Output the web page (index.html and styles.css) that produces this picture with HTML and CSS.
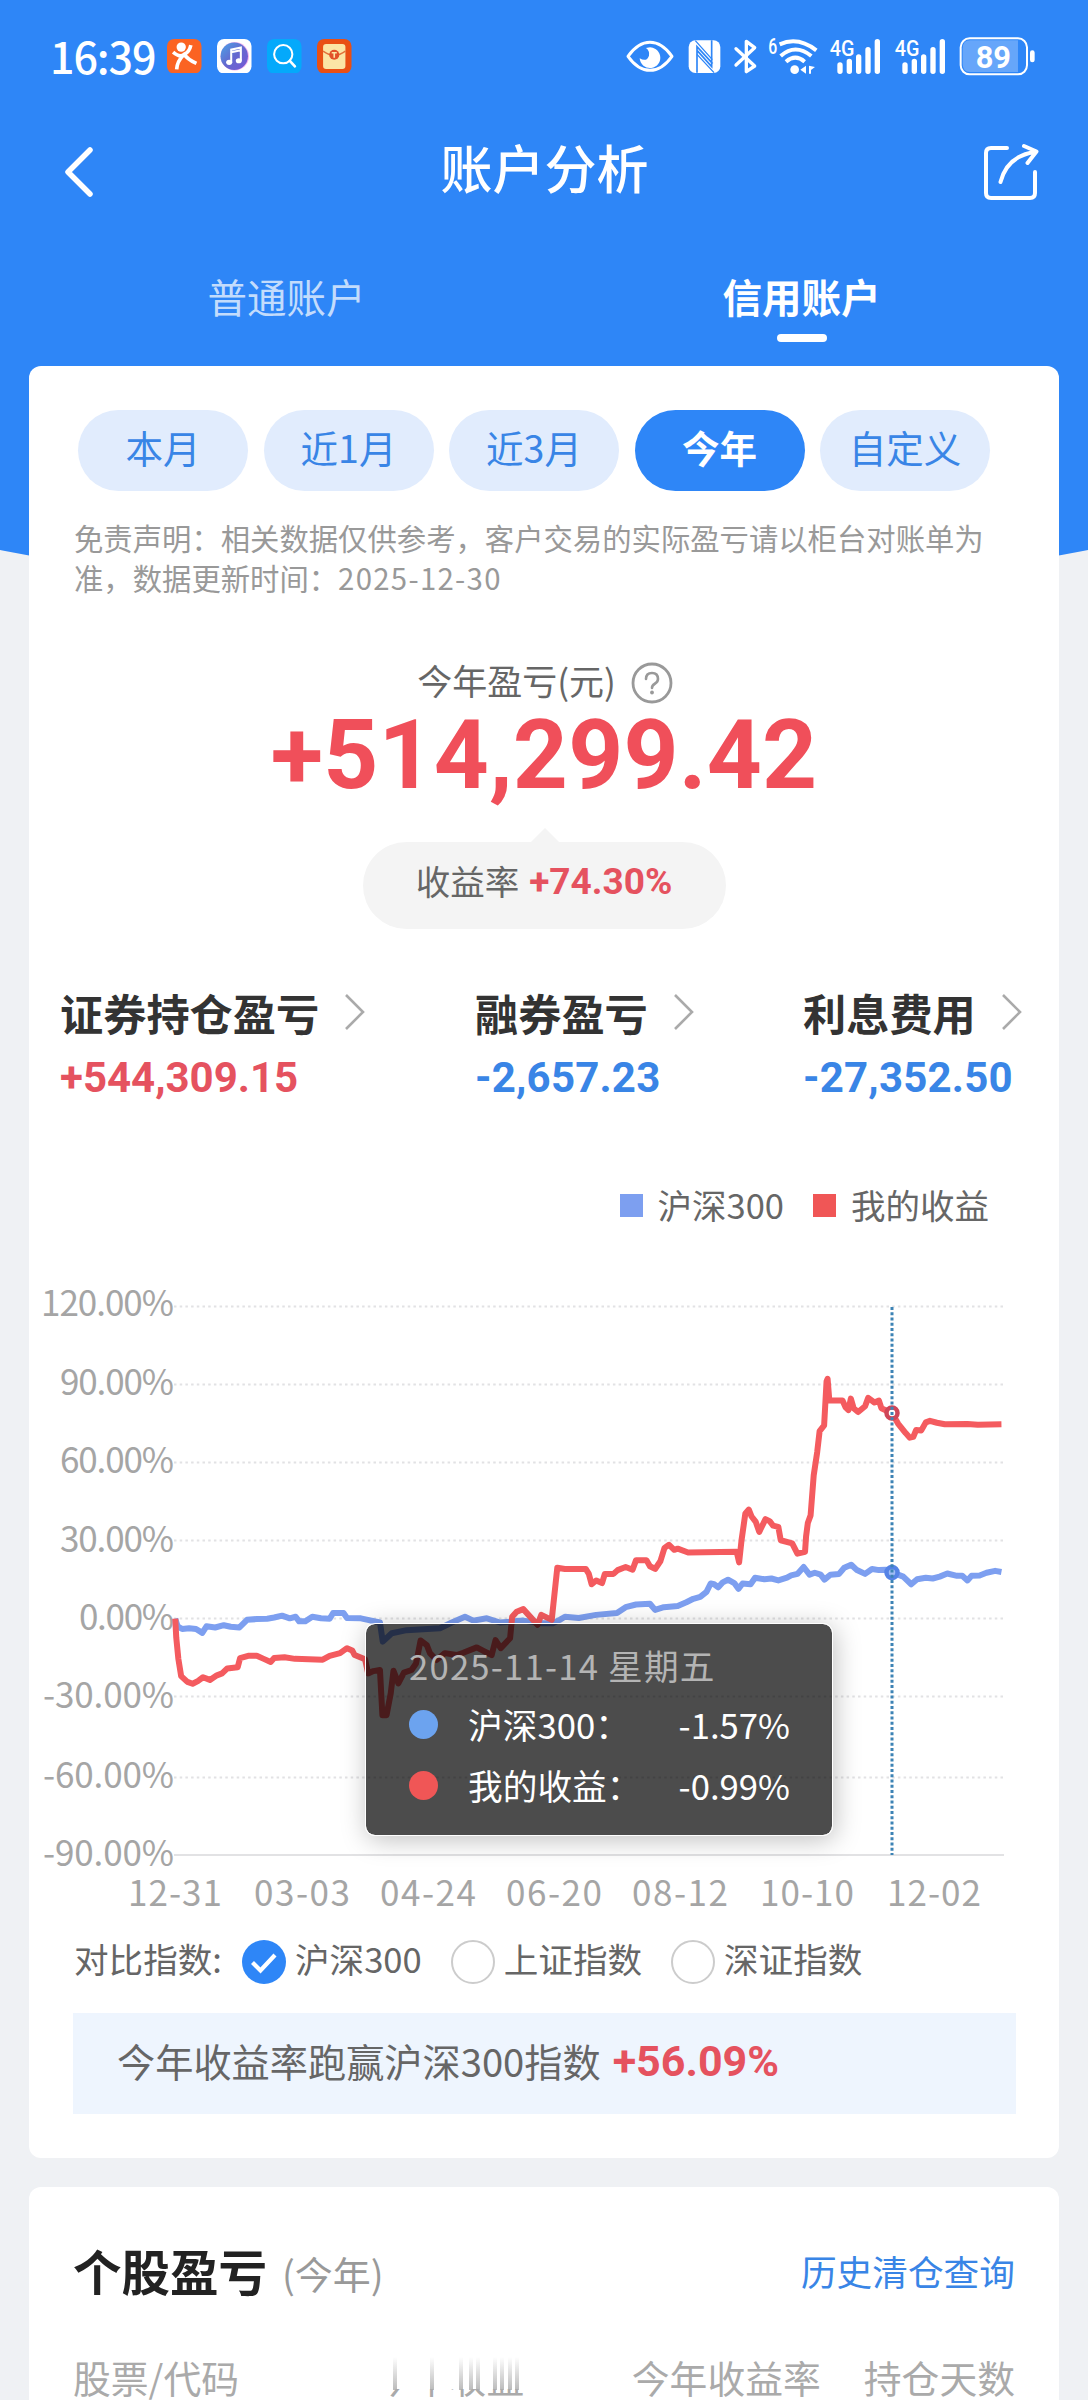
FILE: index.html
```html
<!DOCTYPE html>
<html lang="zh-CN">

<head>
	<meta charset="UTF-8">
	<meta name="viewport" content="width=device-width, initial-scale=1.0">
	<title>账户分析</title>
	<link rel="stylesheet" href="styles.css">
</head>

<body>
	<div class="page">
		<div class="page-bg"></div>

		<!-- 状态栏 -->
		<div class="status-bar">
			<span class="time">16:39</span>
			<div class="app-icons">
				<svg viewBox="0 0 34 34">
					<rect width="34" height="34" rx="7" fill="#fb6322" />
					<circle cx="14" cy="8" r="4.6" fill="#fff" />
					<path d="M6 13Q13 19 17 15Q22 13 23.500 6M17 15Q20 20 29 24M16 16Q10 22 9.500 30" fill="none" stroke="#fff" stroke-width="3.600" />
				</svg>
				<svg viewBox="0 0 34 34">
					<defs>
						<linearGradient id="music" x1="0" y1="0" x2="1" y2="1">
							<stop offset="0" stop-color="#4aa4e8" />
							<stop offset=".5" stop-color="#6469cf" />
							<stop offset="1" stop-color="#7657d6" />
						</linearGradient>
					</defs>
					<rect width="34" height="34" rx="7" fill="#fff" />
					<circle cx="17.500" cy="17" r="14" fill="#f3b5ee" />
					<circle cx="17" cy="17" r="13.500" fill="url(#music)" />
					<path d="M14 23V10.500L23.500 8.500V21.500M14 13L23.500 11" fill="none" stroke="#fff" stroke-width="2" />
					<ellipse cx="12" cy="23" rx="3" ry="2.500" fill="#fff" />
					<ellipse cx="21.500" cy="21.500" rx="3" ry="2.500" fill="#fff" />
				</svg>
				<svg viewBox="0 0 34 34">
					<rect width="34" height="34" rx="7" fill="#04a9fb" />
					<circle cx="16" cy="15" r="9" fill="none" stroke="#fff" stroke-width="2" />
					<path d="M22.500 21.500L27.500 27" stroke="#fff" stroke-width="2.600" stroke-linecap="round" />
				</svg>
				<svg viewBox="0 0 34 34">
					<rect width="34" height="34" rx="7" fill="#e94f14" />
					<rect x="6" y="5" width="22" height="24.500" rx="3" fill="#fbe5a5" />
					<path d="M6 12Q17 20 28 12" fill="none" stroke="#e2703a" stroke-width="1.500" />
					<circle cx="17" cy="15.500" r="5" fill="#e2512a" />
					<path d="M14.500 13.500H19.500M17 13.500V18.500" stroke="#fbe5a5" stroke-width="1.600" />
				</svg>
			</div>
			<div class="sys-icons">
				<svg viewBox="48 20 164 114" width="54.670">
					<path d="M54 78Q84 36 120 36T186 78Q156 120 120 120T54 78Z" fill="none" stroke="#fff" stroke-width="9" stroke-linejoin="round" />
					<path d="M112 52A31 31 0 1 1 89 84Q110 96 117 76Q120 62 108 53Z" fill="#fff" />
				</svg>
				<svg viewBox="212 20 138 114" width="46">
					<rect x="235" y="30" width="95" height="98" rx="20" fill="#fff" />
					<path d="M260 127V49L307 100M304 30V109L260 60" fill="none" stroke="#2e86f7" stroke-width="5" />
					<path d="M255 31L306 88M260 72L311 127" stroke="#2e86f7" stroke-width="4" />
				</svg>
				<svg viewBox="350 20 108 114" width="36">
					<path d="M377 55L433 107L408 124V33L433 52L377 104" fill="none" stroke="#fff" stroke-width="10" stroke-linejoin="round" stroke-linecap="round" />
				</svg>
				<svg viewBox="458 20 182 114" width="60.670">
					<text x="474" y="71" font-size="64" textLength="27" lengthAdjust="spacingAndGlyphs">6</text>
					<g fill="none" stroke="#fff" stroke-width="12">
						<path d="M508 42Q563 17 618 60" />
						<path d="M511 77Q555 38 603 77" />
						<path d="M527 94Q555 70 583 94" />
					</g>
					<circle cx="553" cy="118" r="13" fill="#fff" />
					<path d="M570 118L587 106V130M587 118H577M596 130V106L614 110L602 119V130Z" fill="#fff" />
				</svg>
				<svg viewBox="640 20 195 114" width="65">
					<text x="657" y="76" font-size="68" textLength="74" lengthAdjust="spacingAndGlyphs">4G</text>
					<path d="M688 104V123M716 93V123M744 80V123M772 58V123M800 34V123" stroke="#fff" stroke-width="16" stroke-linecap="round" />
				</svg>
				<svg viewBox="640 20 195 114" width="65">
					<text x="657" y="76" font-size="68" textLength="74" lengthAdjust="spacingAndGlyphs">4G</text>
					<path d="M688 104V123M716 93V123M744 80V123M772 58V123M800 34V123" stroke="#fff" stroke-width="16" stroke-linecap="round" />
				</svg>
				<svg viewBox="1030 20 250 114" width="83.330">
					<path d="M1222 30V125H1078Q1056 125 1056 100V55Q1056 30 1078 30Z" fill="#66a6fa" />
					<rect x="1050" y="24" width="199" height="108" rx="27" fill="none" stroke="#fff" stroke-width="6" />
					<rect x="1258" y="60" width="14" height="36" rx="7" fill="#fff" />
					<text class="level" x="1095" y="113" font-size="96" textLength="106" lengthAdjust="spacingAndGlyphs">89</text>
				</svg>
			</div>
		</div>

		<!-- 导航栏 -->
		<div class="nav-bar">
			<svg class="back" viewBox="0 0 34 56">
				<path d="M28 6L6 28L28 50" fill="none" stroke="#fff" stroke-width="5.500" stroke-linecap="round" stroke-linejoin="round" />
			</svg>
			<h1>账户分析</h1>
			<svg class="share" viewBox="0 0 60 60">
				<path d="M26 6H10Q5 6 5 11V51Q5 56 10 56H49Q54 56 54 51V30M19.500 40Q26 14 54 10M43 4L55.500 9.500L46.500 21" fill="none" stroke="#fff" stroke-width="4" stroke-linecap="round" stroke-linejoin="round" />
			</svg>
		</div>

		<div class="tabs">
			<div class="tab">普通账户</div>
			<div class="tab active">信用账户</div>
		</div>

		<div class="card summary">
			<div class="ranges">
				<span class="range">本月</span>
				<span class="range">近1月</span>
				<span class="range">近3月</span>
				<span class="range active">今年</span>
				<span class="range">自定义</span>
			</div>
			<p class="notice">免责声明：相关数据仅供参考，客户交易的实际盈亏请以柜台对账单为<br>准，数据更新时间：<span class="date">2025-12-30</span></p>

			<div class="total-label">
				<span>今年盈亏(元)</span>
				<svg viewBox="0 0 42 42">
					<circle cx="21" cy="21" r="19" fill="none" stroke="#999" stroke-width="2.800" />
					<path d="M15 17Q15 11 21 11T27 17Q27 20 23.500 22Q21 23.500 21 26" fill="none" stroke="#999" stroke-width="2.600" stroke-linecap="round" />
					<circle cx="21" cy="30.500" r="1.900" fill="#999" />
				</svg>
			</div>
			<div class="total">+514,299.42</div>
			<div class="rate">收益率<b class="num up">+74.30%</b></div>

			<div class="stats">
				<div class="stat">
					<div class="stat-name">证券持仓盈亏<svg viewBox="0 0 22 40"><path d="M2 3L19 20L2 37" /></svg></div>
					<div class="stat-value num up">+544,309.15</div>
				</div>
				<div class="stat">
					<div class="stat-name">融券盈亏<svg viewBox="0 0 22 40"><path d="M2 3L19 20L2 37" /></svg></div>
					<div class="stat-value num down">-2,657.23</div>
				</div>
				<div class="stat">
					<div class="stat-name">利息费用<svg viewBox="0 0 22 40"><path d="M2 3L19 20L2 37" /></svg></div>
					<div class="stat-value num down">-27,352.50</div>
				</div>
			</div>

			<div class="legend">
				<span class="legend-item blue">沪深300</span>
				<span class="legend-item red">我的收益</span>
			</div>

			<!-- 收益曲线 -->
			<div class="chart">
				<svg viewBox="29 1280 1030 640" width="1030" height="640">
					<g class="grid">
						<path d="M174 1306.500H1004M174 1384.500H1004M174 1462.500H1004M174 1540.500H1004M174 1618.500H1004M174 1696.500H1004M174 1777.500H1004" stroke-dasharray="2.500 3.200" />
						<path d="M174 1855H1004" />
					</g>
					<g class="axis-y">
						<text x="174" y="1316" textLength="133">120.00%</text>
						<text x="174" y="1395" textLength="114">90.00%</text>
						<text x="174" y="1473" textLength="114">60.00%</text>
						<text x="174" y="1552" textLength="114">30.00%</text>
						<text x="174" y="1630" textLength="95">0.00%</text>
						<text x="174" y="1708" textLength="131">-30.00%</text>
						<text x="174" y="1788" textLength="131">-60.00%</text>
						<text x="174" y="1866" textLength="131">-90.00%</text>
					</g>
					<g class="axis-x">
						<text x="175" y="1906" textLength="94">12-31</text>
						<text x="302" y="1906" textLength="96">03-03</text>
						<text x="428" y="1906" textLength="96">04-24</text>
						<text x="554" y="1906" textLength="96">06-20</text>
						<text x="680" y="1906" textLength="96">08-12</text>
						<text x="807" y="1906" textLength="94">10-10</text>
						<text x="934" y="1906" textLength="94">12-02</text>
					</g>
					<g class="lines" transform="translate(0 1280) scale(.347 .3827)">
						<polyline stroke="#7d9ff0" points="505,885 512,905 525,912 545,910 565,912 583,922 595,905 620,908 645,902 665,906 690,908 712,888 740,886 770,885 790,882 813,877 835,884 852,880 862,892 880,892 900,880 925,884 950,885 960,870 990,870 1000,883 1040,884 1060,888 1095,895 1103,945 1129,923 1172,915 1268,910 1302,895 1340,880 1364,890 1403,884 1441,895 1508,890 1560,897 1593,897 1613,888 1628,880 1668,883 1718,875 1778,870 1803,855 1833,848 1873,846 1888,862 1913,855 1953,852 1978,842 1998,833 2018,828 2036,815 2048,793 2058,795 2070,803 2083,790 2098,783 2116,792 2128,807 2140,793 2163,795 2176,778 2203,782 2223,780 2243,785 2268,778 2280,772 2298,768 2316,750 2333,770 2348,765 2365,770 2376,783 2393,770 2418,768 2433,752 2453,744 2468,757 2493,768 2513,755 2533,758 2553,757 2571,764 2603,775 2626,795 2643,782 2668,778 2688,780 2708,775 2730,767 2758,773 2773,773 2788,785 2800,773 2823,772 2843,765 2868,760 2886,763" />
						<polyline stroke="#f45b5f" points="505,885 508,935 514,990 522,1035 540,1050 555,1055 570,1048 585,1038 605,1045 625,1033 640,1028 655,1015 685,1012 692,988 715,982 740,982 760,990 780,998 790,988 820,986 850,990 930,992 950,982 980,975 1000,962 1015,968 1022,980 1052,991 1061,1028 1076,1022 1095,1019 1102,1137 1114,1137 1126,1080 1134,1021 1148,1054 1164,1026 1186,1019 1199,1002 1212,942 1230,954 1239,975 1258,993 1282,975 1316,980 1335,974 1374,960 1393,969 1417,980 1428,941 1443,962 1470,936 1476,880 1489,867 1508,860 1523,875 1549,901 1560,875 1590,888 1606,752 1628,755 1688,755 1697,768 1705,795 1718,785 1735,792 1743,768 1768,768 1780,758 1803,750 1823,757 1833,732 1863,732 1873,748 1888,755 1903,735 1915,700 1928,692 1943,705 1953,702 1983,712 2123,710 2130,738 2137,680 2148,610 2158,600 2166,618 2178,632 2188,658 2206,625 2218,630 2228,642 2243,645 2250,680 2283,688 2298,715 2320,710 2323,670 2328,635 2336,615 2345,510 2355,450 2362,395 2375,380 2382,265 2385,258 2390,315 2428,315 2437,333 2445,340 2452,310 2460,335 2473,345 2493,330 2502,308 2520,320 2533,315 2540,335 2571,348 2588,375 2610,400 2622,412 2632,410 2640,392 2655,393 2668,372 2680,368 2700,373 2723,377 2788,376 2818,378 2886,377" />
					</g>
					<circle cx="892" cy="1413" r="5.500" fill="#fff" stroke="#cf4658" stroke-width="4.500" />
					<circle cx="892" cy="1572.500" r="5.500" fill="#9fbcf5" stroke="#5583e6" stroke-width="4.500" />
					<path d="M892 1307V1855" stroke="#3d83b5" stroke-width="3" stroke-dasharray="3 2.250" />
				</svg>
				<div class="tooltip">
					<div class="tooltip-title">2025-11-14 星期五</div>
					<div class="tooltip-row"><i class="dot blue"></i><span>沪深300：</span><em>-1.57%</em></div>
					<div class="tooltip-row"><i class="dot red"></i><span>我的收益：</span><em>-0.99%</em></div>
				</div>
			</div>

			<div class="compare">
				<span class="compare-label">对比指数:</span>
				<label class="option"><svg viewBox="0 0 44 44"><circle cx="22" cy="22" r="22" fill="#2e86f7" /><path d="M10.500 22.500L18.500 30.500L33 15" fill="none" stroke="#fff" stroke-width="4.200" /></svg><span>沪深300</span></label>
				<label class="option"><svg viewBox="0 0 44 44"><circle cx="22" cy="22" r="21" fill="#fff" stroke="#ccc" stroke-width="2" /></svg><span>上证指数</span></label>
				<label class="option"><svg viewBox="0 0 44 44"><circle cx="22" cy="22" r="21" fill="#fff" stroke="#ccc" stroke-width="2" /></svg><span>深证指数</span></label>
			</div>
			<div class="result">今年收益率跑赢沪深300指数<b class="num up">+56.09%</b></div>
		</div>

		<div class="card stocks">
			<div class="stocks-head">
				<h2>个股盈亏</h2>
				<span class="period">(今年)</span>
				<a class="history">历史清仓查询</a>
			</div>
			<div class="stocks-cols">
				<span>股票/代码</span>
				<span class="fading">
					<i style="left: 20px"></i><i style="left: 57px"></i><i style="left: 86px"></i><i style="left: 96px"></i><i style="left: 103px"></i><i style="left: 120px"></i><i style="left: 127px"></i><i style="left: 135px"></i><i style="left: 142px"></i>
					<span class="fading-text">今年收益</span>
				</span>
				<span class="col-rate">今年收益率</span>
				<span class="col-days">持仓天数</span>
			</div>
		</div>
	</div>
</body>

</html>
```
FILE: styles.css
```css
* {
	margin: 0;
	padding: 0;
	box-sizing: border-box;
}

body {
	font-family: "Noto Sans CJK SC", "Noto Sans", sans-serif;
	color: #666;
	background: #eff1f4;
}

svg {
	display: block;
	flex-shrink: 0;
}

.page {
	position: relative;
	width: 1088px;
	height: 2400px;
	overflow: hidden;
}

/* 顶部蓝色弧形背景 */
.page-bg {
	position: absolute;
	z-index: -1;
	top: 0;
	left: -20%;
	width: 140%;
	height: 595px;
	border-radius: 0 0 50% 50% / 0 0 150px 150px;
	background: #2e86f7;
}

.num {
	font-family: Roboto, "Noto Sans CJK SC", sans-serif;
	font-weight: 700;
}

.up {
	color: #e5525f;
}

.down {
	color: #3985e6;
}

.status-bar {
	display: flex;
	align-items: center;
	height: 112px;
	padding: 0 51px 0 50px;
	color: #fff;
}

.time {
	width: 117px;
	font-size: 43px;
	font-weight: 500;
	line-height: 60px;
	letter-spacing: -1.100px;
	white-space: nowrap;
	transform: translateY(-1px);
}

.app-icons {
	display: flex;
	gap: 15.500px;
}

.app-icons svg {
	width: 34.500px;
	height: 34.500px;
}

.sys-icons {
	display: flex;
	margin-left: auto;
}

.sys-icons svg {
	height: 38px;
	overflow: visible;
}

.sys-icons text {
	font-family: Roboto, sans-serif;
	font-weight: 500;
	fill: #fff;
}

.sys-icons .level {
	font-weight: 700;
}

.nav-bar {
	display: flex;
	justify-content: space-between;
	align-items: center;
	height: 120px;
	padding: 0 47px 0 62px;
}

.back {
	width: 34px;
	height: 56px;
}

.nav-bar h1 {
	margin-left: 26px;
	font-size: 52px;
	font-weight: 500;
	line-height: 70px;
	color: #fff;
	transform: translate(-7px, -5px);
}

.share {
	width: 60px;
	height: 60px;
}

.tabs {
	display: flex;
	height: 134px;
	padding: 35px 29px 0;
}

.tab {
	display: flex;
	flex: 1;
	flex-direction: column;
	align-items: center;
	font-size: 39.500px;
	line-height: 58px;
	color: #c3dcfc;
}

.tab.active {
	font-weight: 700;
	color: #fff;
}

.tab.active::after {
	content: "";
	width: 50px;
	height: 8px;
	margin-top: 9px;
	border-radius: 4px;
	background: #fff;
}

.card {
	margin: 0 29px;
	border-radius: 12px;
	background: #fff;
}

.summary {
	height: 1792px;
	padding-top: 44px;
}

.ranges {
	display: flex;
	gap: 15.500px;
	padding-left: 49px;
}

.range {
	width: 170px;
	height: 81px;
	border-radius: 41px;
	font-size: 37.500px;
	line-height: 73px;
	text-align: center;
	color: #3985e6;
	background: #e1ecfd;
}

.range.active {
	font-weight: 700;
	color: #fff;
	background: #2e86f7;
}

.notice {
	margin-top: 26px;
	padding-left: 45px;
	font-size: 29.350px;
	line-height: 40px;
	color: #999;
	white-space: nowrap;
}

.date {
	letter-spacing: 1.300px;
}

.total-label {
	display: flex;
	justify-content: center;
	align-items: center;
	gap: 15px;
	height: 50px;
	margin-top: 61px;
	padding-left: 2px;
	font-size: 35px;
	line-height: 50px;
}

.total-label span {
	transform: translateY(-3px);
}

.total-label svg {
	width: 42px;
	height: 42px;
}

.total {
	height: 134px;
	font-family: Roboto, sans-serif;
	font-size: 96px;
	font-weight: 700;
	line-height: 94px;
	letter-spacing: .2px;
	text-align: center;
	color: #f04f5a;
}

.rate {
	position: relative;
	display: flex;
	justify-content: center;
	width: 363px;
	height: 87px;
	margin: 0 auto;
	border-radius: 44px;
	font-size: 34.500px;
	line-height: 76px;
	background: #f4f4f4;
}

.rate::before {
	content: "";
	position: absolute;
	top: -14px;
	left: 168px;
	border: 14px solid transparent;
	border-top: 0;
	border-bottom-color: #f4f4f4;
}

.rate b {
	margin-left: 10px;
	font-size: 37px;
	line-height: 80px;
}

.stats {
	display: grid;
	grid-template-columns: 415px 328px auto;
	height: 245px;
	padding: 51px 0 0 31px;
}

.stat-name {
	display: flex;
	align-items: center;
	font-size: 43.200px;
	font-weight: 700;
	line-height: 64px;
	color: #333;
}

.stat-name svg {
	width: 22px;
	height: 40px;
	margin-left: 25px;
}

.stat-name path {
	fill: none;
	stroke: #aaa;
	stroke-width: 2.600px;
}

.stat-value {
	font-size: 42px;
	line-height: 67px;
	letter-spacing: .2px;
}

.stat-value.up {
	letter-spacing: 0;
}

.legend {
	display: flex;
	justify-content: flex-end;
	gap: 29px;
	height: 106px;
	padding-right: 70px;
	font-size: 34.500px;
	line-height: 60px;
}

.legend-item {
	display: flex;
	align-items: center;
	height: 60px;
	gap: 15px;
}

.legend-item::before {
	content: "";
	width: 23px;
	height: 23px;
	margin-top: 3px;
	background: #7d9ff0;
}

.legend-item.red::before {
	background: #f05656;
}

.chart {
	position: relative;
	height: 640px;
}

.grid path {
	fill: none;
	stroke: #e2e2e4;
	stroke-width: 2px;
}

.axis-y text,
.axis-x text {
	font-size: 35px;
	fill: #a5a5a5;
}

.axis-y text {
	text-anchor: end;
}

.axis-x text {
	text-anchor: middle;
}

.lines polyline {
	fill: none;
	stroke-width: 6px;
	stroke-linejoin: round;
	vector-effect: non-scaling-stroke;
}

.tooltip {
	position: absolute;
	top: 343px;
	left: 336px;
	width: 468px;
	height: 213px;
	padding: 12px 42px 0 43px;
	border: 1.500px solid #fff;
	border-radius: 10px;
	font-size: 34.700px;
	color: #fff;
	background: rgba(0, 0, 0, .7);
	background-clip: padding-box;
	box-shadow: 2px 4px 26px rgba(0, 0, 0, .25);
}

.tooltip-title {
	line-height: 58px;
	letter-spacing: 1.200px;
	color: #b4b4b4;
}

.tooltip-row {
	display: flex;
	align-items: center;
	height: 61px;
	line-height: 61px;
}

.tooltip-row em {
	margin-left: auto;
	font-style: normal;
}

.dot {
	width: 29px;
	height: 29px;
	margin-right: 30px;
	border-radius: 50%;
}

.dot.blue {
	background: #6ca3ef;
}

.dot.red {
	background: #f05656;
}

.compare {
	display: flex;
	align-items: center;
	height: 84px;
	padding-left: 45px;
	font-size: 34.600px;
	line-height: 50px;
}

.compare-label {
	width: 168px;
}

.compare span {
	transform: translateY(-4px);
}

.option {
	display: flex;
	align-items: center;
	gap: 9px;
	margin-right: 29px;
	line-height: 44px;
}

.option svg {
	width: 44px;
	height: 44px;
}

.result {
	display: flex;
	align-items: center;
	width: 943px;
	height: 101px;
	margin: 9px 0 0 44px;
	padding: 0 0 6px 44px;
	font-size: 38.200px;
	background: #eef5fe;
}

.result b {
	margin-left: 12px;
	font-size: 43px;
}

.stocks {
	height: 300px;
	margin-top: 29px;
	padding: 48px 44px 0;
}

.stocks-head {
	display: flex;
	align-items: center;
	height: 70px;
}

.stocks-head h2 {
	font-size: 48.500px;
	font-weight: 700;
	line-height: 70px;
	color: #222;
}

.period {
	margin: 4px 0 0 15px;
	font-size: 38px;
	color: #999;
}

.history {
	margin-left: auto;
	font-size: 35.700px;
	color: #3985e6;
}

.stocks-cols {
	display: flex;
	height: 60px;
	margin-top: 44px;
	font-size: 37.800px;
	line-height: 56px;
	color: #aaa;
}

/* 淡出的列标题，只露出底部 */
.fading {
	position: relative;
	width: 152px;
	margin-left: 134px;
}

.fading-text {
	display: block;
	clip-path: inset(40px 0 0 0);
}

.fading i {
	position: absolute;
	top: 8px;
	width: 4px;
	height: 33px;
	background: linear-gradient(rgba(170, 170, 170, 0), #bbb);
}

.col-rate {
	margin-left: auto;
}

.col-days {
	margin-left: 43px;
}
```
